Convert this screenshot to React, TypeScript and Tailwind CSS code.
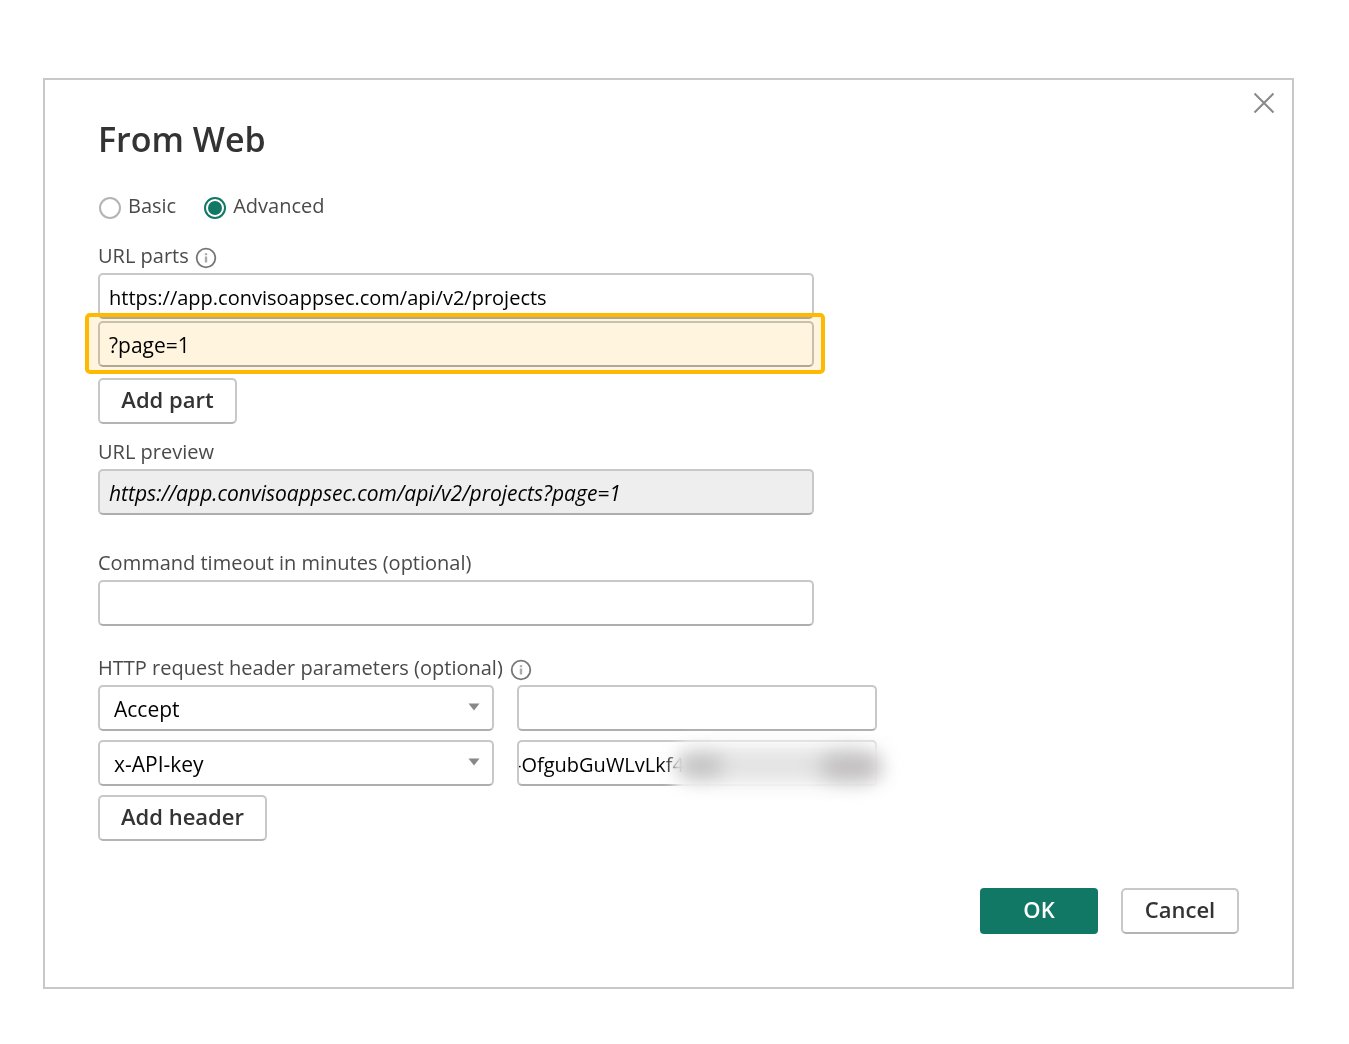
import { useState } from "react";

const box =
  "h-[46px] rounded-[5px] border-2 border-[#c8c8c8] border-b-[#aeaeae] pt-[2px] leading-7 text-black outline-none";
const button =
  "h-[46px] rounded-[5px] border-2 border-[#c8c8c8] border-b-[#b4b4b4] bg-white pb-1 text-[22px] leading-7 font-semibold text-[#333]";

function InfoIcon() {
  return (
    <svg className="mt-1 size-[22px]" viewBox="0 0 22 22" fill="none" aria-hidden="true">
      <circle cx="11" cy="11" r="9.3" stroke="#777" strokeWidth="1.8" />
      <path d="M11 9.5V15.5" stroke="#aaa" strokeWidth="2.4" />
      <path d="M11 6.2V8.2" stroke="#aaa" strokeWidth="2.4" />
    </svg>
  );
}

function HeaderSelect({ label, value }: { label: string; value: string }) {
  return (
    <div className="relative w-[396px]">
      <select
        aria-label={label}
        defaultValue={value}
        className={`${box} w-full appearance-none bg-white pr-10 pl-[14px] text-[21px]`}
      >
        <option>Accept</option>
        <option>x-API-key</option>
      </select>
      <svg
        className="pointer-events-none absolute top-[18px] right-[14px] h-2 w-3"
        viewBox="0 0 12 8"
        aria-hidden="true"
      >
        <path d="M0.5 0.5H11.5L6 7.5Z" fill="#888" />
      </svg>
    </div>
  );
}

function ModeRadio({
  label,
  checked,
  onSelect,
}: {
  label: string;
  checked: boolean;
  onSelect: () => void;
}) {
  return (
    <label className="flex items-center gap-[7px]">
      <input
        type="radio"
        name="mode"
        checked={checked}
        onChange={onSelect}
        className="mt-1 size-[22px] appearance-none rounded-full border-2 border-[#b4b4b4] bg-white checked:border-[#117865] checked:bg-[#117865] checked:bg-clip-content checked:p-[2px]"
      />
      {label}
    </label>
  );
}

export default function App() {
  const [mode, setMode] = useState("advanced");
  return (
    <main className="min-h-screen bg-white px-[43px] pt-[78px] pb-[55px] font-['Open_Sans','Noto_Sans',sans-serif] text-[20px] leading-7 text-[#4a4a4a]">
      <form
        role="dialog"
        aria-labelledby="dialog-title"
        onSubmit={(e) => e.preventDefault()}
        className="relative mr-3 border-2 border-[#c8c8c8] px-[53px] pt-[35px] pb-[53px]"
      >
        <button type="button" aria-label="Close" className="absolute top-3 right-[17px]">
          <svg className="size-[22px]" viewBox="0 0 22 22" fill="none" aria-hidden="true">
            <path d="M1.5 1.5L20.5 20.5M20.5 1.5L1.5 20.5" stroke="#8a8a8a" strokeWidth="2" />
          </svg>
        </button>

        <h1 id="dialog-title" className="text-[34px] leading-[48px] font-semibold text-[#333]">
          From Web
        </h1>

        <div className="mt-[29px] flex gap-[28px] pl-px">
          <ModeRadio label="Basic" checked={mode === "basic"} onSelect={() => setMode("basic")} />
          <ModeRadio
            label="Advanced"
            checked={mode === "advanced"}
            onSelect={() => setMode("advanced")}
          />
        </div>

        <div className="mt-[22px] flex max-w-[716px] flex-col">
          <div className="flex items-center gap-[6px]">
            <label htmlFor="part-1">URL parts</label>
            <InfoIcon />
          </div>
          <input
            id="part-1"
            defaultValue="https://app.convisoappsec.com/api/v2/projects"
            className={`${box} mt-[3px] bg-white px-[9px] text-[20px]`}
          />
          <div className="relative mt-[2px] flex">
            <input
              aria-label="URL part 2"
              defaultValue="?page=1"
              className={`${box} w-full bg-white px-[9px] text-[21px]`}
            />
            <div className="pointer-events-none absolute -top-2 -right-[11px] -bottom-[7px] -left-[13px] rounded-[5px] bg-[#fff5df] mix-blend-multiply" />
            <div className="pointer-events-none absolute -top-2 -right-[11px] -bottom-[7px] -left-[13px] rounded-[5px] border-4 border-[#ffb900]" />
          </div>
          <button type="button" className={`${button} mt-[11px] w-[139px]`}>
            Add part
          </button>

          <label htmlFor="preview" className="mt-[14px]">
            URL preview
          </label>
          <input
            id="preview"
            readOnly
            value="https://app.convisoappsec.com/api/v2/projects?page=1"
            className={`${box} mt-[3px] bg-[#eee] px-[9px] text-[21px] italic`}
          />

          <label htmlFor="timeout" className="mt-[34px]">
            Command timeout in minutes (optional)
          </label>
          <input id="timeout" className={`${box} mt-[3px] bg-white px-[9px] text-[20px]`} />
        </div>

        <div className="mt-[28px] flex items-center gap-[7px]">
          <h2>HTTP request header parameters (optional)</h2>
          <InfoIcon />
        </div>
        <div className="mt-[3px] flex flex-col gap-[9px]">
          <div className="flex gap-[23px]">
            <HeaderSelect label="Header 1 name" value="Accept" />
            <input
              aria-label="Header 1 value"
              className={`${box} w-[360px] bg-white px-[9px] text-[20px]`}
            />
          </div>
          <div className="flex gap-[23px]">
            <HeaderSelect label="Header 2 name" value="x-API-key" />
            <div className="relative w-[360px]">
              <input
                aria-label="Header 2 value"
                defaultValue="-OfgubGuWLvLkf4"
                className={`${box} w-full bg-white indent-[-4px] text-[20px]`}
              />
              <div className="pointer-events-none absolute top-0 -right-3 -bottom-3 left-[156px] rounded-[20px] bg-white/90 blur-[6px]" />
              <div className="pointer-events-none absolute top-[8px] right-0 left-[160px] h-[34px] rounded-full bg-[#e2e2e2] blur-[10px]" />
              <div className="pointer-events-none absolute top-[16px] left-[162px] h-[20px] w-[44px] rounded-full bg-[#b8b8b8]/80 blur-[9px]" />
              <div className="pointer-events-none absolute top-[15px] -right-1 h-[24px] w-[60px] rounded-full bg-[#b4b0b0]/80 blur-[10px]" />
            </div>
          </div>
          <button type="button" className={`${button} w-[169px]`}>
            Add header
          </button>
        </div>

        <div className="mt-[47px] flex justify-end gap-[23px]">
          <button
            type="submit"
            className="h-[46px] w-[118px] rounded-[4px] bg-[#117865] pb-1 text-[22px] leading-7 font-semibold text-white"
          >
            OK
          </button>
          <button type="button" className={`${button} w-[118px]`}>
            Cancel
          </button>
        </div>
      </form>
    </main>
  );
}
